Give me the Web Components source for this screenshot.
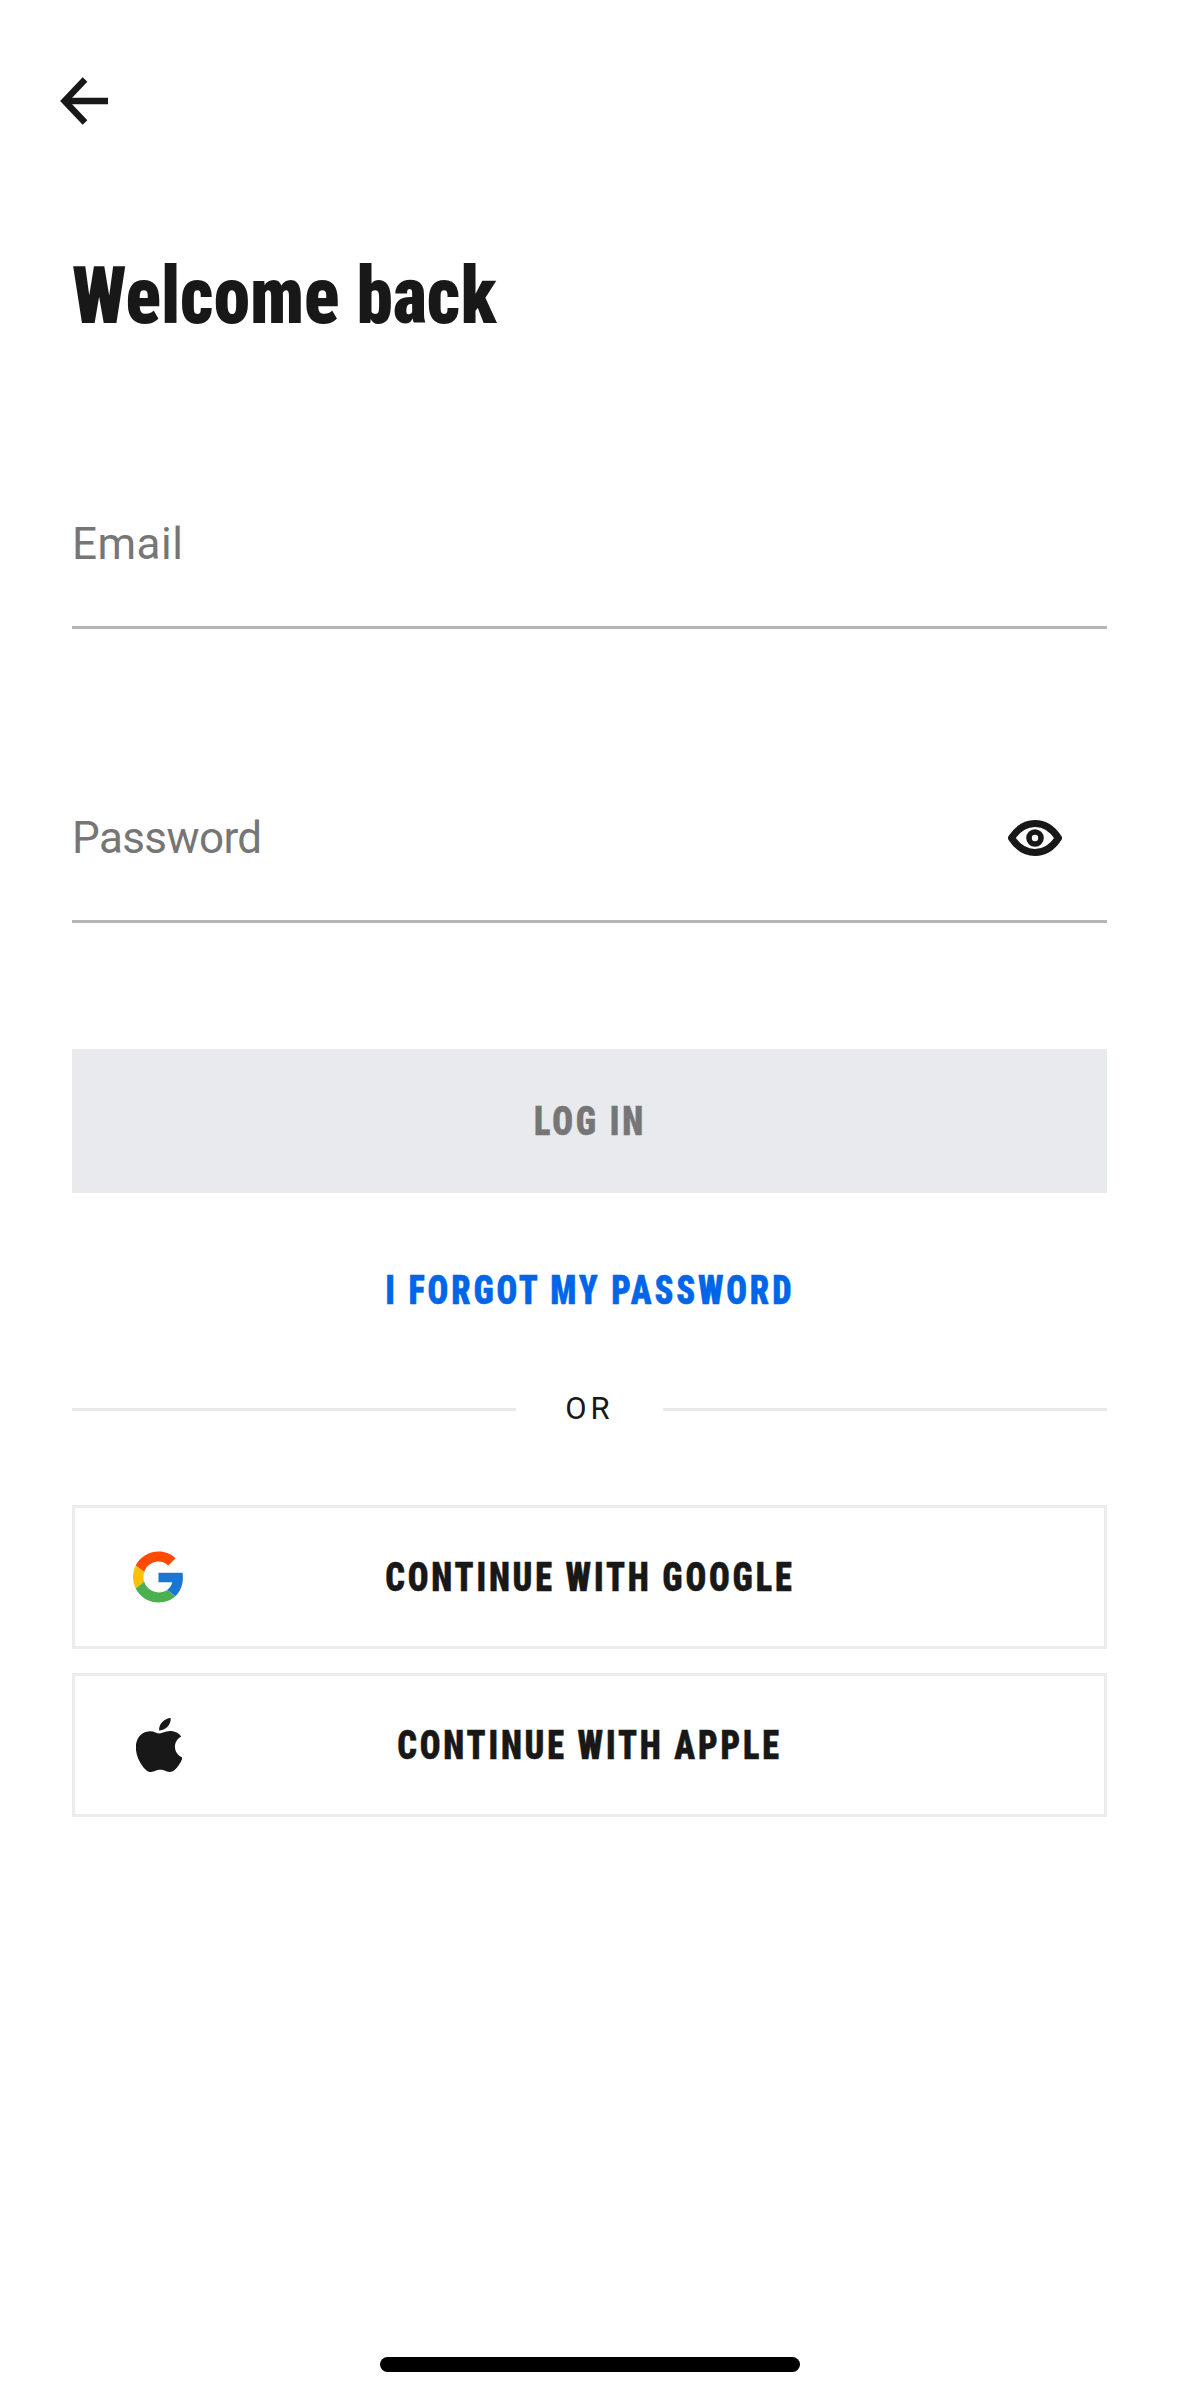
<!DOCTYPE html>
<html lang="en">
<head>
<meta charset="utf-8">
<title>Welcome back</title>
<style>
  html, body { margin:0; padding:0; background:#fff; }
  body { font-family:"Roboto",sans-serif; color:#181818; }
</style>
</head>
<body>
<login-screen>
  <back-button></back-button>
  <page-title>Welcome back</page-title>
  <text-field style="letter-spacing:.5px">Email</text-field>
  <text-field password style="letter-spacing:-.6px">Password</text-field>
  <submit-button>LOG IN</submit-button>
  <text-link>I FORGOT MY PASSWORD</text-link>
  <or-divider>OR</or-divider>
  <social-button>
    <svg slot="icon" width="51" height="52" viewBox="0 0 48 48">
      <path fill="#ff4a00" d="M24 9.5c3.54 0 6.71 1.22 9.21 3.6l6.85-6.85C35.9 2.38 30.47 0 24 0 14.62 0 6.51 5.38 2.56 13.22l7.98 6.19C12.43 13.72 17.74 9.5 24 9.5z"/>
      <path fill="#1976d2" d="M46.98 24.55c0-1.57-.15-3.09-.38-4.55H24v9.02h12.94c-.58 2.96-2.26 5.48-4.78 7.18l7.73 6c4.51-4.18 7.09-10.36 7.09-17.65z"/>
      <path fill="#ffc107" d="M10.53 28.59c-.48-1.45-.76-2.99-.76-4.59s.27-3.14.76-4.59l-7.98-6.19C.92 16.46 0 20.12 0 24c0 3.88.92 7.54 2.56 10.78l7.97-6.19z"/>
      <path fill="#4caf50" d="M24 48c6.48 0 11.93-2.13 15.89-5.81l-7.73-6c-2.15 1.45-4.92 2.3-8.16 2.3-6.26 0-11.57-4.22-13.47-9.91l-7.98 6.19C6.51 42.62 14.62 48 24 48z"/>
    </svg>
    CONTINUE WITH GOOGLE
  </social-button>
  <social-button>
    <svg slot="icon" width="46" height="54" viewBox="2.3 0 19.2 24" preserveAspectRatio="none">
      <path fill="#181818" d="M12.152 6.896c-.948 0-2.415-1.078-3.96-1.04-2.04.027-3.91 1.183-4.961 3.014-2.117 3.675-.546 9.103 1.519 12.09 1.013 1.454 2.208 3.09 3.792 3.039 1.52-.065 2.09-.987 3.935-.987 1.831 0 2.35.987 3.96.948 1.637-.026 2.676-1.48 3.676-2.948 1.156-1.688 1.636-3.325 1.662-3.415-.039-.013-3.182-1.221-3.22-4.857-.026-3.04 2.48-4.494 2.597-4.559-1.429-2.09-3.623-2.324-4.39-2.376-2-.156-3.675 1.09-4.61 1.09zM15.53 3.83c.843-1.012 1.4-2.427 1.245-3.83-1.207.052-2.662.805-3.532 1.818-.78.896-1.454 2.338-1.273 3.714 1.338.104 2.715-.688 3.559-1.701"/>
    </svg>
    CONTINUE WITH APPLE
  </social-button>
  <home-bar></home-bar>
</login-screen>

<script>
// heavy condensed look: Roboto Black at its narrowest width, squeezed a bit more with scaleX
const condensed = `font-family:"Roboto",sans-serif; font-weight:900; font-stretch:75%;`;
const label = `${condensed} font-size:40px; line-height:40px; letter-spacing:3.25px; -webkit-text-stroke:.4px currentColor;`;
const squeeze = `.t { display:inline-block; padding-top:2px; transform:scaleX(.86); white-space:nowrap; }`;

class LoginScreen extends HTMLElement {
  constructor() {
    super();
    this.attachShadow({ mode: "open" }).innerHTML = `
      <style>
        :host { display:flex; flex-direction:column; box-sizing:border-box; width:1179px; height:2396px; padding:77px 72px 24px; background:#fff; }
      </style>
      <slot></slot>`;
  }
}

class BackButton extends HTMLElement {
  constructor() {
    super();
    this.attachShadow({ mode: "open" }).innerHTML = `
      <style>
        :host { display:block; width:48px; height:48px; margin-left:-12px; }
        svg { display:block; }
      </style>
      <svg width="48" height="48" viewBox="0 0 48 48" fill="none" stroke="#181818" stroke-width="6.5">
        <path d="M48 24H6"/>
        <path d="M25 2.5L4.6 24L25 45.5"/>
      </svg>`;
  }
}

class PageTitle extends HTMLElement {
  constructor() {
    super();
    this.attachShadow({ mode: "open" }).innerHTML = `
      <style>
        :host { display:block; margin-top:131px; height:79px; white-space:nowrap; ${condensed}
          font-size:80px; line-height:80px; color:#181818; }
        span { display:inline-block; transform:scaleX(.917); transform-origin:left center; }
      </style>
      <span><slot></slot></span>`;
  }
}

class TextField extends HTMLElement {
  constructor() {
    super();
    const eye = this.hasAttribute("password") ? `
      <svg width="54" height="36" viewBox="0 0 54 36" fill="none" stroke="#181818">
        <path stroke-width="7" stroke-linejoin="round" d="M3.5 18C10 8 18 3.5 27 3.5S44 8 50.5 18C44 28 36 32.5 27 32.5S10 28 3.5 18Z"/>
        <circle cx="27" cy="18" r="6" stroke-width="5.6"/>
      </svg>` : "";
    this.attachShadow({ mode: "open" }).innerHTML = `
      <style>
        :host { display:flex; align-items:center; justify-content:space-between; box-sizing:border-box; height:163px;
          margin-top:131px; padding:0 45px 4px 0; border-bottom:3px solid #b5b5b5;
          font:400 44px/50px "Roboto",sans-serif; color:#767676; }
        svg { display:block; }
      </style>
      <span><slot></slot></span>${eye}`;
  }
}

class SubmitButton extends HTMLElement {
  constructor() {
    super();
    this.attachShadow({ mode: "open" }).innerHTML = `
      <style>
        :host { display:flex; align-items:center; justify-content:center; height:144px; margin-top:126px; background:#e9eaee;
          ${label} color:#767676; }
        ${squeeze}
      </style>
      <span class="t"><slot></slot></span>`;
  }
}

class TextLink extends HTMLElement {
  constructor() {
    super();
    this.attachShadow({ mode: "open" }).innerHTML = `
      <style>
        :host { display:flex; align-items:center; justify-content:center; height:194px;
          ${label} color:#0066e8; }
        ${squeeze}
      </style>
      <span class="t"><slot></slot></span>`;
  }
}

class OrDivider extends HTMLElement {
  constructor() {
    super();
    this.attachShadow({ mode: "open" }).innerHTML = `
      <style>
        :host { display:grid; grid-template-columns:1fr 147px 1fr; align-items:center; height:44px; margin-bottom:74px;
          font:400 31px/44px "Roboto",sans-serif; letter-spacing:4px; color:#181818; text-align:center; }
        i { display:block; height:3px; background:#e9e9ec; }
      </style>
      <i></i><span><slot></slot></span><i></i>`;
  }
}

class SocialButton extends HTMLElement {
  constructor() {
    super();
    this.attachShadow({ mode: "open" }).innerHTML = `
      <style>
        :host { display:grid; grid-template-columns:1fr auto 1fr; align-items:center; box-sizing:border-box; height:144px;
          margin-bottom:24px; border:3px solid #ececec;
          ${label} color:#181818; }
        .icon { display:flex; justify-content:center; width:51px; margin-left:58px; }
        ${squeeze}
      </style>
      <div class="icon"><slot name="icon"></slot></div>
      <span class="t"><slot></slot></span>`;
  }
}

class HomeBar extends HTMLElement {
  constructor() {
    super();
    this.attachShadow({ mode: "open" }).innerHTML = `
      <style>
        :host { display:block; width:420px; height:15px; margin:auto 0 0 308px; background:#000; border-radius:8px; }
      </style>`;
  }
}

customElements.define("login-screen", LoginScreen);
customElements.define("back-button", BackButton);
customElements.define("page-title", PageTitle);
customElements.define("text-field", TextField);
customElements.define("submit-button", SubmitButton);
customElements.define("text-link", TextLink);
customElements.define("or-divider", OrDivider);
customElements.define("social-button", SocialButton);
customElements.define("home-bar", HomeBar);
</script>
</body>
</html>
